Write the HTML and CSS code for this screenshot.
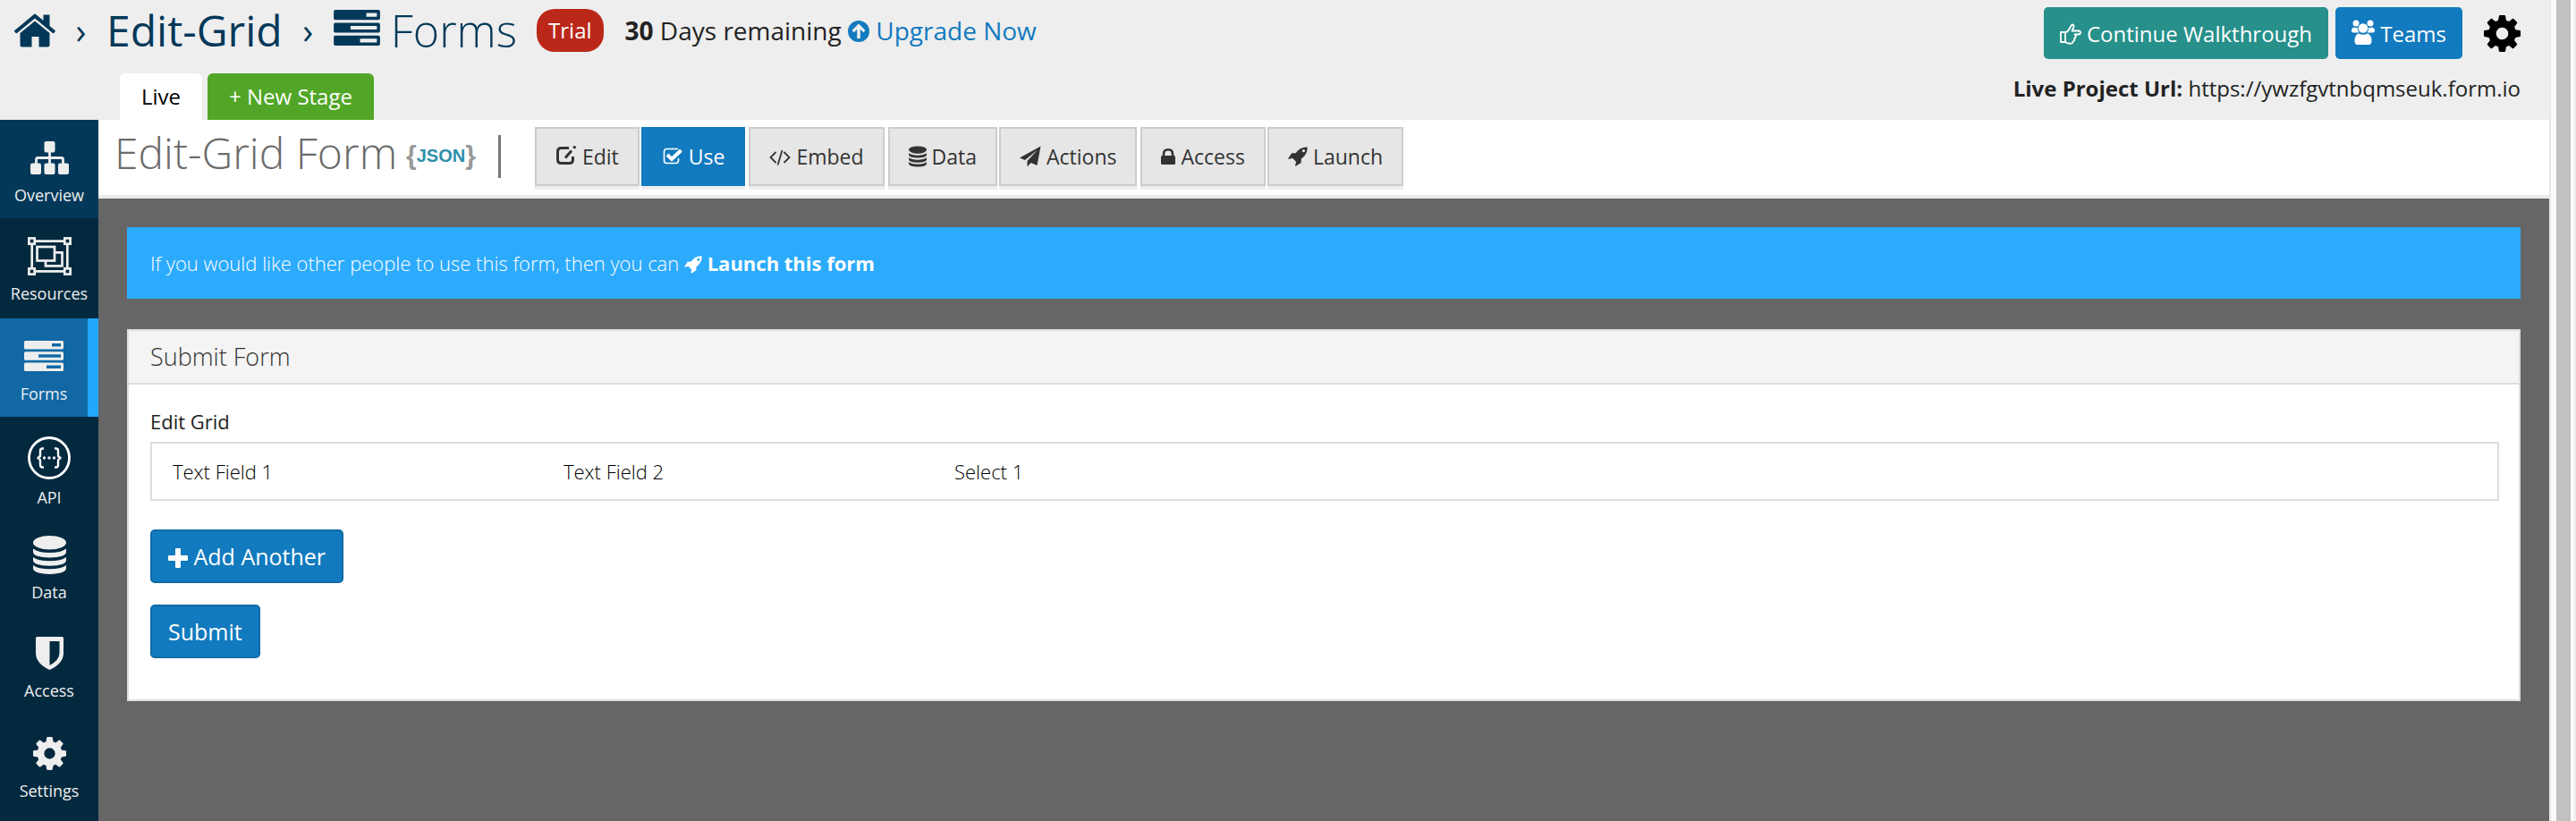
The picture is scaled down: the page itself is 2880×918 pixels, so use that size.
FILE: index.html
```html
<!DOCTYPE html>
<html lang="en">
<head>
<meta charset="utf-8">
<title>Edit-Grid Form</title>
<link rel="stylesheet" href="styles.css">
</head>
<body>
<svg class="sprite" aria-hidden="true">
  <symbol id="i-forms" viewBox="0 0 44 34">
    <path fill-rule="evenodd" d="M1.500 0h41a1.500 1.500 0 0 1 1.500 1.500v6.500a1.500 1.500 0 0 1-1.500 1.500h-41a1.500 1.500 0 0 1-1.500-1.500v-6.500a1.500 1.500 0 0 1 1.500-1.500zM31 3v3.500h10v-3.500zM1.500 12.250h41a1.500 1.500 0 0 1 1.500 1.500v6.500a1.500 1.500 0 0 1-1.500 1.500h-41a1.500 1.500 0 0 1-1.500-1.500v-6.500a1.500 1.500 0 0 1 1.500-1.500zM16 15.250v3.500h25v-3.500zM1.500 24.500h41a1.500 1.500 0 0 1 1.500 1.500v6.500a1.500 1.500 0 0 1-1.500 1.500h-41a1.500 1.500 0 0 1-1.500-1.500v-6.500a1.500 1.500 0 0 1 1.500-1.500zM25 27.500v3.500h16v-3.500z"/>
  </symbol>
  <symbol id="i-gear" viewBox="0 0 24 24">
    <path fill-rule="evenodd" d="M9.900.500Q10 0 10.500 0h3q.500 0 .600.500l.500 2.900 1.800.750 2.300-1.750q.400-.300.800 0l2.150 2.150q.300.400 0 .800l-1.700 2.300.750 1.850 2.850.400q.450.100.450.600v3q0 .500-.450.600l-2.850.500-.750 1.800 1.700 2.300q.300.400 0 .800l-2.150 2.150q-.400.300-.800 0l-2.300-1.700-1.800.750-.500 2.850q-.100.450-.600.450h-3q-.500 0-.600-.450l-.500-2.850-1.800-.750-2.300 1.700q-.400.300-.800 0l-2.150-2.150q-.300-.400 0-.800l1.700-2.300-.750-1.800-2.850-.500q-.450-.100-.450-.600v-3q0-.500.450-.600l2.850-.400.750-1.850-1.700-2.300q-.300-.400 0-.800l2.150-2.150q.400-.300.800 0l2.300 1.750 1.800-.750zM12 8a4 4 0 1 0 0 8a4 4 0 1 0 0-8z"/>
  </symbol>
  <symbol id="i-data" viewBox="0 0 37 43">
    <ellipse cx="18.500" cy="7.700" rx="18.500" ry="7.700"/>
    <path d="M0 14.500q6 4.500 18.500 4.500t18.500-4.500v3.500q0 6-18.500 6.500q-18.500-.500-18.500-6.500zM0 24q6 4.300 18.500 4.300t18.500-4.300v3.300q0 6-18.500 6.500q-18.500-.500-18.500-6.500zM0 33q6 4.300 18.500 4.300t18.500-4.300v3.300q0 6-18.500 6.700q-18.500-.700-18.500-6.700z"/>
  </symbol>
  <symbol id="i-rocket" viewBox="0 0 24 24">
    <path fill-rule="evenodd" d="M23.500.500q.700 8.500-7.300 14.300l-.200 4.700-6.500 4.300-.800-.900 1.300-4.300-4.600-4.600-4.300 1.300-.900-.800 4.300-6.500 4.700-.200q5.800-8 14.300-7.300zM19 3.200a1.800 1.800 0 1 0 0 3.600a1.800 1.800 0 1 0 0-3.600z"/>
  </symbol>
</svg>

<div class="window">
  <div class="app">
    <header class="topbar">
      <div class="topbar-left">
        <nav class="crumbs" aria-label="Breadcrumb">
          <a class="crumb-home" href="#" aria-label="Home">
            <svg width="46" height="38" viewBox="0 0 46 38"><path d="M23 8.500L39.500 22v13.500a2 2 0 0 1-2 2H27.500V26h-8v11.500H8.500a2 2 0 0 1-2-2V22z"/><path d="M22 1q1-1 2 0l8.500 7V1.500h7V14l6 5q.700.700.200 1.300l-1.500 1.700q-.600.600-1.300 0L23 5.500 3 22q-.700.600-1.300 0L.200 20.300q-.500-.700.200-1.300z"/></svg>
          </a>
          <span class="sep">›</span>
          <a href="#">Edit-Grid</a>
          <span class="sep">›</span>
          <a class="crumb-current" href="#"><svg class="crumb-forms" width="52" height="40"><use href="#i-forms"/></svg>Forms</a>
        </nav>
        <span class="badge">Trial</span>
        <p class="trial"><strong>30</strong> Days remaining
          <a href="#"><svg width="24" height="24" viewBox="0 0 24 24"><path fill-rule="evenodd" d="M12 0a12 12 0 1 0 0 24a12 12 0 1 0 0-24zM12 3.500l7.500 7.500-2.200 2.200-3.500-3.400V20h-3.600V9.800l-3.500 3.400L4.500 11z"/></svg> Upgrade Now</a></p>
      </div>
      <div class="topbar-right">
        <button class="btn teal" type="button"><svg class="line" width="24" height="24" viewBox="0 0 24 24" stroke-width="1.800" stroke-linejoin="round"><path d="M1 10h5v11h-5zM6 10.500q3-1 5-5t3-4q2.500.500 1 4l-1.500 3h7.500q2 .300 2 2t-2 2h-4.500q1.800 1 1 2.800t-1.500 1.400q1 1.500 0 2.600t-1.500 1q.300 2.200-2 2.400-3.500.300-6.500-1.700"/></svg> Continue Walkthrough</button>
        <button class="btn" type="button"><svg width="26" height="28" viewBox="0 0 26 28"><circle cx="5" cy="4" r="3.500"/><circle cx="21" cy="4" r="3.500"/><circle cx="13" cy="9.500" r="5.300"/><path d="M3 8.500q2 1.300 4 .400q-.500 3.500 1.500 5.600H2.500Q0 14.500 0 12t3-3.500zM23 8.500q-2 1.300-4 .400q.500 3.500-1.500 5.600h6q2.500 0 2.500-2.500t-3-3.500zM8 15.500q5 2.500 10 0q4.500 1 4.500 8.500 0 4-3.500 4H7q-3.500 0-3.500-4 0-7.500 4.500-8.500z"/></svg> Teams</button>
        <button class="icon-btn" type="button" aria-label="Settings"><svg width="41" height="41"><use href="#i-gear"/></svg></button>
      </div>
      <div class="stages">
        <a class="stage" href="#">Live</a>
        <a class="stage stage-new" href="#">+ New Stage</a>
      </div>
      <p class="project-url"><strong>Live Project Url:</strong> https://ywzfgvtnbqmseuk.form.io</p>
    </header>

    <div class="body">
      <nav class="sidebar" aria-label="Project">
        <a class="side overview" href="#"><span class="side-icon"><svg width="43" height="37" viewBox="0 0 43 37"><rect x="15.500" y="0" width="12" height="12.500" rx="2"/><rect x="0" y="24.500" width="12" height="12.500" rx="2"/><rect x="15.500" y="24.500" width="12" height="12.500" rx="2"/><rect x="31" y="24.500" width="12" height="12.500" rx="2"/><path d="M6.500 25v-4.500q0-2 2-2h26q2 0 2 2V25M21.500 12v13" fill="none" stroke="currentColor" stroke-width="2.800"/></svg></span>Overview</a>
        <a class="side resources" href="#"><span class="side-icon"><svg class="line" width="49" height="43" viewBox="0 0 49 43" stroke-width="2.700"><path d="M9 4.700h31M9 38.300h31M4.700 9v25M44.300 9v25"/><rect x="1.400" y="1.400" width="6.300" height="6.300"/><rect x="41.300" y="1.400" width="6.300" height="6.300"/><rect x="1.400" y="35.300" width="6.300" height="6.300"/><rect x="41.300" y="35.300" width="6.300" height="6.300"/><rect x="10.500" y="11" width="19.500" height="15.500"/><path d="M30 17.300h8.500v15h-18.500v-6"/></svg></span>Resources</a>
        <a class="side forms" href="#" aria-current="page"><span class="side-icon"><svg width="44" height="34"><use href="#i-forms"/></svg></span>Forms</a>
        <a class="side api" href="#"><span class="side-icon"><svg width="48" height="48" viewBox="0 0 48 48"><circle cx="24" cy="24" r="22.500" fill="none" stroke="#fff" stroke-width="2.800"/><path d="M18 13.500h-1.500q-2.500 0-2.500 2.500v4.500q0 3.500-3.500 3.500q3.500 0 3.500 3.500v4.500q0 2.500 2.500 2.500h1.500M30 13.500h1.500q2.500 0 2.500 2.500v4.500q0 3.500 3.500 3.500q-3.500 0-3.500 3.500v4.500q0 2.500-2.500 2.500h-1.500" fill="none" stroke="#fff" stroke-width="2.400"/><circle cx="18.500" cy="24" r="1.700"/><circle cx="24" cy="24" r="1.700"/><circle cx="29.500" cy="24" r="1.700"/></svg></span>API</a>
        <a class="side" href="#"><span class="side-icon"><svg width="37" height="43"><use href="#i-data"/></svg></span>Data</a>
        <a class="side access" href="#"><span class="side-icon"><svg width="31" height="37" viewBox="0 0 31 37"><path fill-rule="evenodd" d="M1.500 0h28A1.500 1.500 0 0 1 31 1.500V18q0 12-15.500 19Q0 30 0 18V1.500A1.500 1.500 0 0 1 1.500 0zM15.500 5v27q11-6 11-14V5z"/></svg></span>Access</a>
        <a class="side" href="#"><span class="side-icon"><svg width="37" height="37"><use href="#i-gear"/></svg></span>Settings</a>
      </nav>

      <main class="main">
        <div class="titlebar">
          <h1>Edit-Grid Form</h1>
          <a class="json" href="#"><span class="brace">{</span>JSON<span class="brace">}</span></a>
          <span class="divider"></span>
          <nav class="tabs" aria-label="Form">
            <a class="tab" href="#"><svg class="line" width="24" height="24" viewBox="0 0 24 24" stroke-width="3"><path d="M15 2.500H6.500q-4 0-4 4v9q0 4 4 4h9q4 0 4-4V12"/><path d="M11 13.500l7-8M20.300 2.700l2-2.200"/></svg>Edit</a>
            <a class="tab active" href="#"><svg class="line" width="24" height="24" viewBox="0 0 24 24"><path stroke-width="1.600" d="M18 3.500H5.500q-3 0-3 3v10q0 3 3 3h10q3 0 3-3V14"/><path stroke-width="4" d="M6 10l5 5L21.500 5"/></svg>Use</a>
            <a class="tab gap" href="#"><svg class="line" width="24" height="24" viewBox="0 0 24 24" stroke-width="1.800"><path d="M7.500 7l-6 6 6 6M16.500 7l6 6-6 6M14.500 5l-5 16.500"/></svg>Embed</a>
            <a class="tab gap" href="#"><svg width="20" height="24"><use href="#i-data"/></svg>Data</a>
            <a class="tab" href="#"><svg width="24" height="24" viewBox="0 0 24 24"><path d="M23.500.500L19.500 22l-7-3-4 4.500v-6.500L20 4.500 6 16 0 13.500z"/></svg>Actions</a>
            <a class="tab gap" href="#"><svg width="16" height="24" viewBox="0 0 16 24"><rect y="11" width="16" height="10" rx="1.500"/><path d="M3 12V9q0-4.700 5-4.700t5 4.700v3" fill="none" stroke="currentColor" stroke-width="2.600"/></svg>Access</a>
            <a class="tab" href="#"><svg width="22" height="24"><use href="#i-rocket"/></svg>Launch</a>
          </nav>
        </div>

        <div class="content">
          <p class="alert">If you would like other people to use this form, then you can <a href="#"><svg width="20" height="20"><use href="#i-rocket"/></svg> Launch this form</a></p>

          <section class="panel">
            <h2>Submit Form</h2>
            <form class="panel-body">
              <h3>Edit Grid</h3>
              <div class="grid-head">
                <span>Text Field 1</span>
                <span>Text Field 2</span>
                <span>Select 1</span>
              </div>
              <button class="btn outlined" type="button"><svg width="22" height="22" viewBox="0 0 22 22"><path d="M9 0h4q1 0 1 1v7h7q1 0 1 1v4q0 1-1 1h-7v7q0 1-1 1H9q-1 0-1-1v-7H1q-1 0-1-1V9q0-1 1-1h7V1q0-1 1-1z"/></svg> Add Another</button>
              <button class="btn outlined" type="submit">Submit</button>
            </form>
          </section>
        </div>
      </main>
    </div>
  </div>
  <div class="scroll-track"><div class="scroll-thumb"></div></div>
</div>
</body>
</html>
```

FILE: styles.css
```css
* { box-sizing: border-box; }

body {
  margin: 0;
  font-family: "Open Sans", "Noto Sans", sans-serif;
  font-size: 24px;
  color: #222;
  background: #666;
}

a { color: inherit; text-decoration: none; }
h1, h2, h3, p { margin: 0; }
button { font: inherit; }
svg { fill: currentColor; flex: none; }
svg.line { fill: none; stroke: currentColor; }
.sprite { display: none; }

.window { display: flex; min-height: 100vh; }
.app { flex: 1; display: flex; flex-direction: column; min-width: 0; }

.scroll-track {
  display: flex;
  width: 30px;
  padding: 0 4px 0 6px;
  background: #fafafa;
  border-left: 2px solid #e8e8e8;
  border-right: 2px solid #ededed;
}
.scroll-thumb { flex: 1; background: #c1c1c1; }

/* Top bar */
.topbar {
  display: grid;
  grid-template-columns: 1fr auto;
  grid-template-rows: 74px 60px;
  padding-right: 32px;
  background: #eee;
}
.topbar-left { display: flex; align-items: center; padding: 0 0 6px 16px; }
.crumbs {
  display: flex;
  align-items: center;
  color: #033859;
  font-size: 48px;
  line-height: 64px;
}
.crumb-home { display: flex; }
.sep { width: 57px; text-align: center; font-size: 40px; }
.crumb-current { display: flex; align-items: center; gap: 12px; font-size: 50px; font-weight: 300; line-height: 60px; }
.crumb-forms { margin-top: -6px; }
.badge {
  margin-left: 22px;
  padding: 0 13px;
  border-radius: 20px;
  background: #bb281a;
  color: #fff;
  font-weight: 500;
  line-height: 48px;
}
.trial { margin-left: 24px; font-size: 28px; }
.trial a { color: #127abe; }
.trial svg { vertical-align: -2px; }

.topbar-right { display: flex; align-items: center; justify-content: flex-end; gap: 8px; }
.btn {
  height: 58px;
  padding: 0 18px;
  border: 0;
  border-radius: 5px;
  background: #127abe;
  color: #fff;
  font-weight: 500;
}
.btn svg { vertical-align: -3px; }
.btn.teal { background: #27908a; }
.icon-btn {
  display: flex;
  margin-left: 16px;
  padding: 0;
  border: 0;
  background: none;
  color: #000;
}

.stages { display: flex; align-items: flex-end; gap: 6px; padding-left: 134px; }
.stage {
  padding: 0 24px;
  border-radius: 6px 6px 0 0;
  background: #fff;
  color: #000;
  line-height: 52px;
}
.stage-new { background: #51a627; color: #fff; font-weight: 500; }
.project-url { justify-self: end; line-height: 50px; }

/* Sidebar */
.body { flex: 1; display: flex; }
.sidebar { width: 110px; flex: none; background: #03293f; }
.side {
  display: flex;
  flex-direction: column;
  align-items: center;
  gap: 4px;
  height: 110px;
  padding-top: 18px;
  color: #eee;
  font-size: 18px;
  font-weight: 500;
  line-height: 28px;
}
.side-icon { display: flex; align-items: center; justify-content: center; height: 48px; }
.overview { background: #033859; }
.resources, .access { height: 112px; }
.forms { background: #1168a5; border-right: 12px solid #22a7ff; }
.api { height: 112px; padding-top: 22px; gap: 6px; }

/* Title row */
.main { flex: 1; min-width: 0; background: #666; }
.titlebar {
  display: flex;
  align-items: flex-start;
  height: 88px;
  padding: 8px 18px 0;
  background: #fff;
  border-bottom: 4px solid #ebebeb;
}
h1 { font-size: 48px; font-weight: 300; line-height: 58px; color: #6b6b6b; }
.json {
  display: flex;
  align-items: center;
  margin-left: 10px;
  height: 64px;
  color: #2d8fab;
  font-family: "Liberation Sans", Arial, sans-serif;
  font-size: 20px;
  font-weight: 700;
}
.brace { color: #999; font-size: 30px; line-height: 30px; }
.divider { width: 3px; height: 48px; margin: 9px 38px 0 25px; background: #777; }
.tabs { display: flex; gap: 2px; }
.tab {
  display: flex;
  align-items: center;
  gap: 6px;
  height: 66px;
  padding: 0 21px;
  border: 2px solid #ccc;
  background: #e6e6e6;
  box-shadow: 0 4px 0 #eee;
  color: #333;
  font-size: 23px;
}
.tab.gap { margin-left: 2px; }
.tab.active { border-color: #127abe; background: #127abe; color: #fff; font-weight: 500; }

/* Content */
.content { padding: 32px; }
.alert {
  padding: 0 26px;
  background: #2cabfd;
  color: #fff;
  font-size: 22px;
  font-weight: 300;
  line-height: 80px;
}
.alert a { font-weight: 700; }
.alert svg { vertical-align: -3px; }

.panel { margin-top: 34px; border: 2px solid #ddd; background: #fff; }
h2 {
  padding: 0 24px;
  border-bottom: 2px solid #ddd;
  background: #f4f4f4;
  color: #333;
  font-size: 27px;
  font-weight: 300;
  line-height: 58px;
}
.panel-body { display: flex; flex-direction: column; align-items: flex-start; padding: 24px 22px 46px 24px; }
h3 { font-size: 22px; font-weight: 500; line-height: 34px; }
.grid-head {
  display: grid;
  grid-template-columns: repeat(6, 1fr);
  width: 100%;
  margin: 6px 0 32px;
  border: 2px solid #ddd;
  color: #000;
  font-size: 22px;
  font-weight: 300;
  line-height: 62px;
}
.grid-head span { padding-left: 23px; }
.btn.outlined { height: 60px; border: 2px solid #106ba7; font-size: 25px; }
.btn.outlined + .btn.outlined { margin-top: 24px; }
```
